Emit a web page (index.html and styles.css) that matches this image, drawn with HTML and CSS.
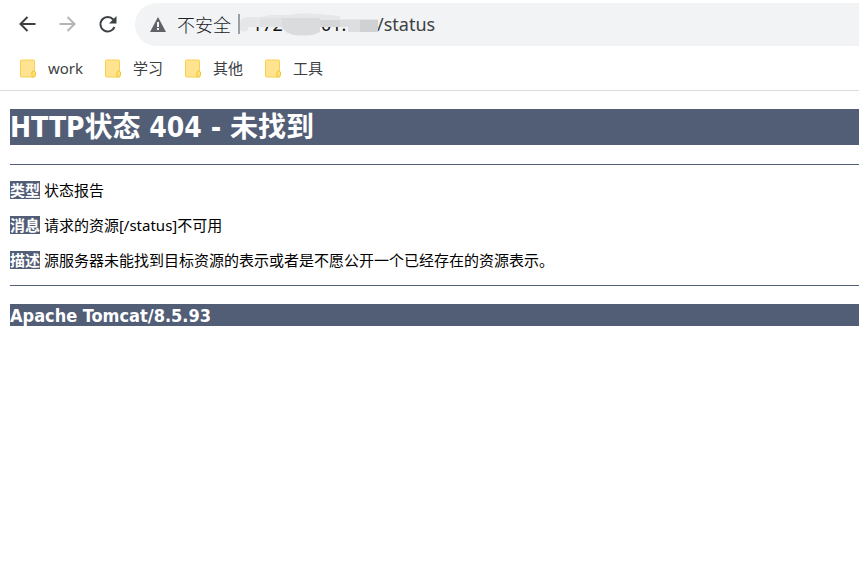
FILE: index.html
```html
<!DOCTYPE html>
<html lang="zh-CN">
<head>
<meta charset="utf-8">
<title>HTTP状态 404 - 未找到</title>
<link rel="stylesheet" href="styles.css">
</head>
<body>
<header class="browser">
  <div class="toolbar">
    <nav class="nav">
      <button class="nav-button" type="button" aria-label="后退"><svg width="20" height="20" viewBox="0 0 20 20"><path d="M17.500 9H2.500M9.500 2L2.500 9L9.500 16"/></svg></button>
      <button class="nav-button" type="button" aria-label="前进" disabled><svg width="20" height="20" viewBox="0 0 20 20"><path d="M1.500 9H16.500M9.500 2L16.500 9L9.500 16"/></svg></button>
      <button class="nav-button" type="button" aria-label="重新加载"><svg width="20" height="20" viewBox="0 0 20 20"><path d="M16.500 12A7.300 7.300 0 1 1 15.300 4.500"/><path class="solid" d="M18.500 1V8.500H11Z"/></svg></button>
    </nav>
    <div class="address">
      <button class="security" type="button">
        <svg width="16" height="15" viewBox="0 0 16 15"><path fill="#5f6368" d="M8 0L16 15H0Z"/><path fill="#f1f3f4" d="M7 5H9V10H7ZM7 11H9V13H7Z"/></svg>
        <span>不安全</span>
      </button>
      <span class="divider"></span>
      <span class="host">
        <span>172</span><span>01.</span>
        <svg class="smudge" width="138" height="26" viewBox="0 0 138 26"><path fill="#f1f3f4" d="M0 0H138V15H0Z"/><path fill="#e5e7e8" d="M0 11Q0 5 8 5H20L30 3H50Q62 0 78 2L100 4V7H138V15H8V18Q4 21 0 18Z"/><path fill="#dfe1e2" d="M20 6H42V15H20Z"/><path fill="#d9dbdc" d="M42 6H80V20Q72 25 54 23Q46 21 42 16Z"/><path fill="#d4d6d7" d="M80 8H100V15H80Z"/><path fill="#dcdedf" d="M100 8H120V20H108V15H100Z"/><path fill="#cfd1d2" d="M120 8H138V20H120Z"/></svg>
      </span>
      <input class="url" type="text" aria-label="地址" value="/status">
    </div>
  </div>
  <nav class="bookmarks">
    <a href="#"><svg width="17" height="19" viewBox="0 0 17 19"><rect x="1.500" y="1" width="14" height="17" rx="1" fill="#ffe391" stroke="#f6d251"/><path d="M13 18V13Q14.500 10.500 16.500 13V16L15.500 18Z" fill="#ffe07a" stroke="#efc72f"/></svg>work</a>
    <a href="#"><svg width="17" height="19" viewBox="0 0 17 19"><rect x="1.500" y="1" width="14" height="17" rx="1" fill="#ffe391" stroke="#f6d251"/><path d="M13 18V13Q14.500 10.500 16.500 13V16L15.500 18Z" fill="#ffe07a" stroke="#efc72f"/></svg>学习</a>
    <a href="#"><svg width="17" height="19" viewBox="0 0 17 19"><rect x="1.500" y="1" width="14" height="17" rx="1" fill="#ffe391" stroke="#f6d251"/><path d="M13 18V13Q14.500 10.500 16.500 13V16L15.500 18Z" fill="#ffe07a" stroke="#efc72f"/></svg>其他</a>
    <a href="#"><svg width="17" height="19" viewBox="0 0 17 19"><rect x="1.500" y="1" width="14" height="17" rx="1" fill="#ffe391" stroke="#f6d251"/><path d="M13 18V13Q14.500 10.500 16.500 13V16L15.500 18Z" fill="#ffe07a" stroke="#efc72f"/></svg>工具</a>
  </nav>
</header>
<main class="report">
  <h1>HTTP状态 404 - 未找到</h1>
  <hr>
  <p><b>类型</b> 状态报告</p>
  <p><b>消息</b> 请求的资源[/status]不可用</p>
  <p><b>描述</b> 源服务器未能找到目标资源的表示或者是不愿公开一个已经存在的资源表示。</p>
  <hr>
  <h3>Apache Tomcat/8.5.93</h3>
</main>
</body>
</html>
```
FILE: styles.css
```css
* { box-sizing: border-box; }
body {
  margin: 0;
  background: #fff;
  color: #000;
  font-family: "Noto Sans", "Noto Sans CJK SC", sans-serif;
}
button, input {
  margin: 0;
  padding: 0;
  border: 0;
  background: none;
  font: inherit;
  color: inherit;
}
svg { display: block; flex: none; }
.browser { border-bottom: 1px solid #dadce0; }
.toolbar {
  display: flex;
  align-items: center;
  padding: 3px 0 0 18px;
}
.nav { display: flex; gap: 20px; }
.nav-button {
  width: 20px;
  height: 20px;
  color: #3c4043;
}
.nav-button:disabled { color: #b3b5b7; }
.nav-button path { fill: none; stroke: currentColor; stroke-width: 2; }
.nav-button .solid { fill: currentColor; stroke: none; }
.address {
  display: flex;
  align-items: center;
  flex: 1;
  height: 43px;
  margin-left: 17px;
  padding: 0 0 1px 15px;
  border-radius: 22px 0 0 22px;
  background: #f1f3f4;
  font-size: 18px;
  color: #3c4043;
}
.security {
  display: flex;
  align-items: center;
  gap: 11px;
  font-family: "Noto Sans CJK SC", sans-serif;
  font-weight: 300;
  color: #202124;
}
.divider {
  width: 2px;
  height: 20px;
  margin-left: 7px;
  background: #9aa0a6;
}
.host {
  position: relative;
  display: flex;
  gap: 38px;
  width: 137px;
  padding-left: 12px;
  color: #111;
}
.smudge { position: absolute; left: 0; top: 0; }
.url { flex: 1; min-width: 0; }
.bookmarks {
  display: flex;
  gap: 21px;
  height: 44px;
  padding-left: 19px;
  align-items: center;
}
.bookmarks a {
  display: flex;
  align-items: center;
  gap: 12px;
  color: #3c4043;
  font-size: 15px;
  line-height: 20px;
  text-decoration: none;
}
.report { padding: 18px 0 0 10px; }
h1, h3 {
  margin: 0;
  padding-top: 2px;
  background: #525d76;
  color: #fff;
  font-family: "DejaVu Sans Condensed", "Noto Sans CJK SC", sans-serif;
}
h1 { font-size: 28px; line-height: 34px; }
h3 { font-size: 18px; line-height: 20px; }
hr {
  height: 1px;
  margin: 19px 0 15px;
  border: 0;
  background: #525d76;
}
p { margin: 0 0 15px; font-size: 15px; line-height: 20px; }
b {
  display: inline-block;
  height: 18px;
  line-height: 18px;
  background: #525d76;
  color: #fff;
}
p + hr { margin: 0 0 18px; }
```
